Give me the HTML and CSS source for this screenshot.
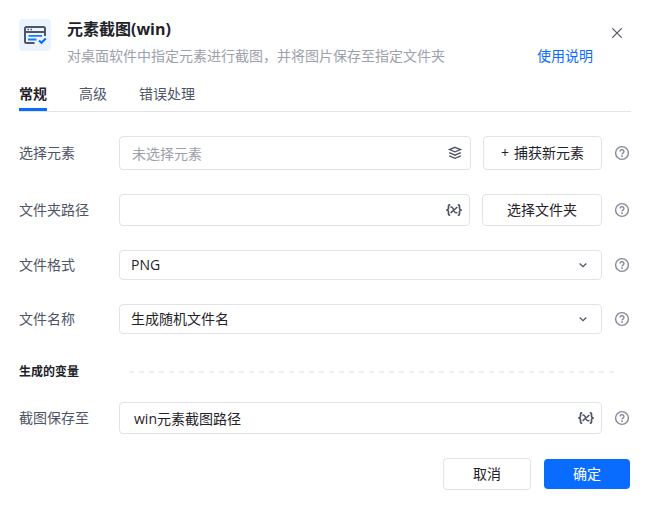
FILE: index.html
```html
<!DOCTYPE html>
<html lang="zh-CN">
<head>
<meta charset="utf-8">
<title>元素截图(win)</title>
<link rel="stylesheet" href="styles.css">
</head>
<body>
<svg class="defs" aria-hidden="true">
  <symbol id="help" viewBox="0 0 16 16">
    <circle cx="8" cy="8" r="6.4" fill="none" stroke="currentColor" stroke-width="1.4"/>
    <path d="M6.100 6.500a1.900 1.900 0 1 1 2.900 1.600c-.7.4-1 .7-1 1.300" fill="none" stroke="currentColor" stroke-width="1.400"/>
    <circle cx="8" cy="11.200" r=".9" fill="currentColor"/>
  </symbol>
  <symbol id="variable" viewBox="0 0 16 16">
    <path d="M4.200 2.800H3.600Q2.500 2.800 2.500 4v2.200Q2.500 7.500.9 8q1.600.5 1.600 1.800V12q0 1.200 1.100 1.200H4.200M11.800 2.800h.6q1.100 0 1.100 1.200v2.200q0 1.300 1.600 1.800-1.600.5-1.600 1.800V12q0 1.200-1.100 1.200H11.800" fill="none" stroke="currentColor" stroke-width="1.700"/>
    <path d="M4.400 5.200q1.700-.5 2.400 1l1.900 3.600q.8 1.300 2.700.8M11.400 5L4.600 10.900" fill="none" stroke="currentColor" stroke-width="1.500"/>
  </symbol>
  <symbol id="chevron" viewBox="0 0 16 16">
    <path d="M4.700 6.500L8 9.700l3.300-3.200" fill="none" stroke="currentColor" stroke-width="1.300"/>
  </symbol>
</svg>
<main class="dialog">
  <header class="header">
    <svg class="logo" viewBox="0 0 32 32" aria-hidden="true">
      <rect width="32" height="32" rx="4" fill="#ebf3ff"/>
      <path d="M15.500 24H7.500Q6 24 6 22.500V9.500Q6 8 7.500 8h17Q26 8 26 9.500V17M6 13h20" fill="none" stroke="#4e5566" stroke-width="2"/>
      <path d="M8.500 10.500h1.500M11.500 10.500h1.500" stroke="#4e5566" stroke-width="1.500"/>
      <path d="M9.500 16.900h13.500M9 20.500h8.500" stroke="#1677ff" stroke-width="1.800"/>
      <path d="M20 21.500l2.500 2.300 4.300-4.300" fill="none" stroke="#0a6cff" stroke-width="2"/>
    </svg>
    <div class="heading">
      <h1 class="title">元素截图(win)</h1>
      <p class="subtitle">对桌面软件中指定元素进行截图，并将图片保存至指定文件夹</p>
    </div>
    <a class="guide" href="#guide">使用说明</a>
    <button class="close" type="button" aria-label="关闭">
      <svg viewBox="0 0 10 10" aria-hidden="true"><path d="M.3.3l9.400 9.400M9.700.3L.3 9.700" stroke="currentColor" stroke-width="1.200"/></svg>
    </button>
  </header>
  <nav class="tabs" aria-label="设置">
    <button class="tab active" type="button">常规</button>
    <button class="tab" type="button">高级</button>
    <button class="tab" type="button">错误处理</button>
  </nav>
  <form class="form">
    <div class="row">
      <label class="label" for="element">选择元素</label>
      <div class="field tall">
        <input class="control" id="element" type="text" placeholder="未选择元素">
        <svg class="suffix" viewBox="0 0 16 16" aria-hidden="true"><path d="M8 2.300l5.600 2.300L8 6.900 2.400 4.600zM2.200 7.700L8 10.200l5.800-2.500M2.200 10.800L8 13.300l5.800-2.500" fill="none" stroke="currentColor" stroke-width="1.300"/></svg>
      </div>
      <button class="button action capture" type="button"><span>+</span><span>捕获新元素</span></button>
      <button class="help" type="button" aria-label="帮助"><svg><use href="#help"/></svg></button>
    </div>
    <div class="row">
      <label class="label" for="folder">文件夹路径</label>
      <div class="field">
        <input class="control" id="folder" type="text">
        <svg class="suffix" aria-hidden="true"><use href="#variable"/></svg>
      </div>
      <button class="button action" type="button">选择文件夹</button>
      <button class="help" type="button" aria-label="帮助"><svg><use href="#help"/></svg></button>
    </div>
    <div class="row">
      <label class="label" for="format">文件格式</label>
      <div class="field short">
        <select class="control" id="format"><option>PNG</option></select>
        <svg class="suffix arrow" aria-hidden="true"><use href="#chevron"/></svg>
      </div>
      <button class="help" type="button" aria-label="帮助"><svg><use href="#help"/></svg></button>
    </div>
    <div class="row">
      <label class="label" for="filename">文件名称</label>
      <div class="field short">
        <select class="control" id="filename"><option>生成随机文件名</option></select>
        <svg class="suffix arrow" aria-hidden="true"><use href="#chevron"/></svg>
      </div>
      <button class="help" type="button" aria-label="帮助"><svg><use href="#help"/></svg></button>
    </div>
    <div class="section">
      <h2 class="section-title">生成的变量</h2>
      <span class="dashes"></span>
    </div>
    <div class="row">
      <label class="label" for="output">截图保存至</label>
      <div class="field">
        <input class="control output" id="output" type="text" value="win元素截图路径">
        <svg class="suffix" aria-hidden="true"><use href="#variable"/></svg>
      </div>
      <button class="help" type="button" aria-label="帮助"><svg><use href="#help"/></svg></button>
    </div>
    <footer class="footer">
      <button class="button cancel" type="button">取消</button>
      <button class="button primary" type="submit">确定</button>
    </footer>
  </form>
</main>
</body>
</html>
```
FILE: styles.css
```css
* {
  box-sizing: border-box;
}

body {
  margin: 0;
  background: #fff;
  color: #1f2329;
  font: 14px/20px "Open Sans", "Noto Sans CJK SC", sans-serif;
}

button,
input,
select {
  margin: 0;
  padding: 0;
  border: 0;
  background: none;
  color: inherit;
  font: inherit;
}

svg {
  display: block;
}

.defs {
  display: none;
}

.dialog {
  padding: 19px 20px 20px 19px;
}

.header {
  display: flex;
}

.logo {
  flex: none;
  width: 32px;
  height: 32px;
  margin-right: 16px;
}

.heading {
  flex: 1;
}

.title {
  margin: 0 0 7px;
  font-size: 16px;
  font-weight: 700;
  line-height: 20px;
}

.subtitle {
  margin: 0;
  color: #9da1ab;
  line-height: 20px;
}

.guide {
  margin: 27px 14px 0 0;
  color: #0a6cff;
  text-decoration: none;
}

.close {
  width: 20px;
  height: 20px;
  margin: 4px 4px 0 0;
  padding: 5px;
  color: #4e5566;
}

.close svg {
  width: 10px;
  height: 10px;
}

.tabs {
  display: flex;
  gap: 32px;
  margin-top: 17px;
  border-bottom: 1px solid #e1e3e8;
}

.tab {
  height: 28px;
  padding-bottom: 4px;
  border-bottom: 3px solid transparent;
  color: #4e5566;
}

.tab.active {
  border-bottom-color: #0a6cff;
  color: #1f2329;
  font-weight: 700;
}

.form {
  display: flex;
  flex-direction: column;
  gap: 24px;
  padding: 24px 1px 0 0;
}

.row {
  display: flex;
  align-items: center;
}

.label {
  flex: none;
  width: 100px;
  color: #4e5566;
}

.field {
  position: relative;
  flex: 1;
  height: 32px;
}

.control {
  width: 100%;
  height: 100%;
  padding: 0 40px 0 12px;
  border: 1px solid #e1e3e8;
  border-radius: 4px;
  background: #fff;
  appearance: none;
}

select.control {
  padding-left: 11px;
}

.output {
  padding-left: 14px;
}

.control::placeholder {
  color: #9da1ab;
  opacity: 1;
}

.tall {
  height: 34px;
}

.short {
  height: 30px;
}

.suffix {
  position: absolute;
  top: 50%;
  right: 8px;
  width: 16px;
  height: 16px;
  margin-top: -8px;
  color: #4e5566;
  pointer-events: none;
}

.arrow {
  right: 11px;
}

.button {
  height: 32px;
  border: 1px solid #e1e3e8;
  border-radius: 4px;
}

.action {
  flex: none;
  width: 120px;
  margin-left: 12px;
}

.capture {
  display: flex;
  align-items: center;
  justify-content: center;
  gap: 5px;
  width: 119px;
  height: 34px;
}

.help {
  flex: none;
  width: 16px;
  height: 16px;
  margin-left: 12px;
  color: #858a96;
}

.help svg {
  width: 16px;
  height: 16px;
}

.section {
  display: flex;
  align-items: center;
  height: 28px;
  margin-bottom: -8px;
}

.section-title {
  flex: none;
  width: 110px;
  margin: 0;
  font-size: 12px;
  font-weight: 700;
}

.dashes {
  flex: 1;
  height: 2px;
  margin-right: 16px;
  background: repeating-linear-gradient(90deg, #eeeff3 0 5px, transparent 5px 10px);
}

.footer {
  display: flex;
  align-items: center;
  justify-content: flex-end;
  gap: 13px;
}

.cancel {
  width: 88px;
}

.primary {
  width: 86px;
  height: 30px;
  border: 0;
  background: #0a6cff;
  color: #fff;
}
```
